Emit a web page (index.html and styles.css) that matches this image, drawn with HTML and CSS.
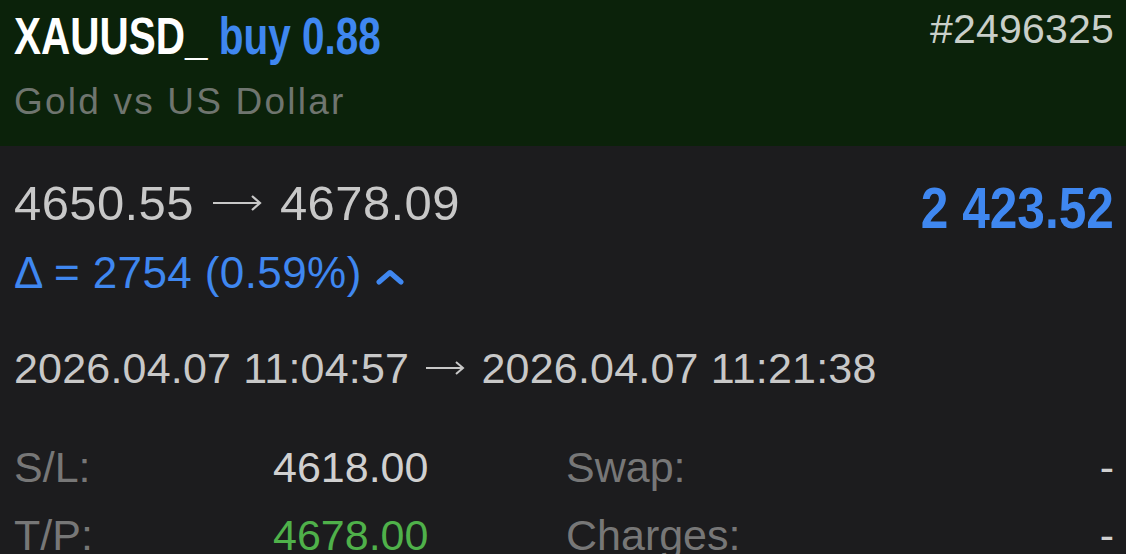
FILE: index.html
```html
<!DOCTYPE html>
<html lang="en">
<head>
  <meta charset="UTF-8">
  <title>XAUUSD position</title>
  <meta name="viewport" content="width=device-width, initial-scale=1">
  <link rel="stylesheet" href="styles.css">
</head>
<body>

<div class="header">
  <div class="head-left">
    <div class="title"><span class="symbol">XAUUSD_</span> <span class="side">buy 0.88</span></div>
    <div class="desc">Gold vs US Dollar</div>
  </div>
  <div class="ticket">#2496325</div>
</div>

<div class="content">
  <div class="price-row">
    <div>
      <div class="prices">
        4650.55
        <svg class="arrow" width="50" height="18" viewBox="0 0 50 18">
          <path d="M1 9H48M40 2L48 9L40 16" fill="none" stroke="#c8c8c8" stroke-width="2.2"/>
        </svg>
        4678.09
      </div>
      <div class="delta">
        &Delta; = 2754 (0.59%)
        <svg class="chevron" width="28" height="16" viewBox="0 0 28 16">
          <polyline points="3,13 14,3.5 25,13" fill="none" stroke="#3f87f0" stroke-width="5" stroke-linecap="round" stroke-linejoin="round"/>
        </svg>
      </div>
    </div>
    <div class="profit">2 423.52</div>
  </div>

  <div class="dates">
    2026.04.07 11:04:57
    <svg class="arrow small" width="40" height="16" viewBox="0 0 40 16">
      <path d="M1 8H38M31 2L38 8L31 14" fill="none" stroke="#c8c8c8" stroke-width="2"/>
    </svg>
    2026.04.07 11:21:38
  </div>

  <div class="details">
    <div class="label">S/L:</div>
    <div class="value">4618.00</div>
    <div class="label">Swap:</div>
    <div class="value right">-</div>

    <div class="label">T/P:</div>
    <div class="value green">4678.00</div>
    <div class="label">Charges:</div>
    <div class="value right">-</div>
  </div>
</div>

</body>
</html>
```

FILE: styles.css
```css
body {
  margin: 0;
  background: #1c1c1e;
  font-family: "Liberation Sans", Arial, sans-serif;
  overflow: hidden;
}
.header {
  height: 146px;
  box-sizing: border-box;
  background: #0b220a;
  padding: 8px 12px 0 14px;
  display: flex;
  justify-content: space-between;
  align-items: flex-start;
}
.title {
  font-weight: bold;
  font-size: 51px;
  line-height: 58px;
  white-space: nowrap;
  transform: scaleX(0.794);
  transform-origin: left center;
}
.symbol {
  color: #ffffff;
}
.side {
  color: #3f87f0;
}
.desc {
  margin-top: 15px;
  font-size: 37px;
  line-height: 42px;
  color: #6f756f;
  letter-spacing: 2.2px;
}
.ticket {
  margin-top: -2px;
  font-size: 41px;
  line-height: 46px;
  color: #c9cfc9;
  letter-spacing: 0.2px;
}
.content {
  padding: 29px 12px 0 14px;
}
.price-row {
  display: flex;
  justify-content: space-between;
  align-items: flex-start;
}
.prices {
  font-size: 49px;
  line-height: 56px;
  color: #c8c8c8;
  letter-spacing: 0.4px;
  white-space: nowrap;
}
.arrow {
  margin: 0 4px;
  vertical-align: 8px;
}
.arrow.small {
  margin: 0 4px;
  vertical-align: 7px;
}
.delta {
  margin-top: 17px;
  font-size: 44px;
  line-height: 50px;
  color: #3f87f0;
  letter-spacing: 0.4px;
  white-space: nowrap;
}
.chevron {
  margin-left: 2px;
  vertical-align: 3px;
}
.profit {
  margin-top: 1px;
  font-weight: bold;
  font-size: 57px;
  line-height: 64px;
  color: #3f87f0;
  white-space: nowrap;
  transform: scaleX(0.87);
  transform-origin: right center;
}
.dates {
  margin-top: 45px;
  font-size: 43px;
  line-height: 50px;
  color: #c8c8c8;
  letter-spacing: 0.2px;
  white-space: nowrap;
}
.details {
  margin-top: 40px;
  display: grid;
  grid-template-columns: 259px 293px 1fr auto;
  font-size: 43px;
  line-height: 68px;
}
.label {
  color: #777777;
}
.value {
  color: #d0d0d0;
}
.value.green {
  color: #4fb14a;
}
.value.right {
  text-align: right;
}
```
